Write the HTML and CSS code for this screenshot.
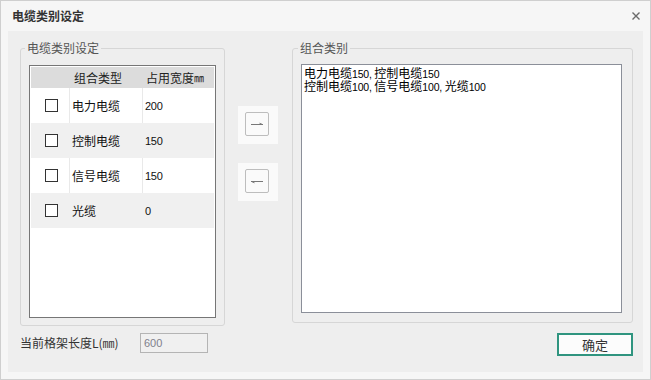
FILE: index.html
```html
<!DOCTYPE html>
<html lang="zh-CN">
<head>
<meta charset="utf-8">
<title>电缆类别设定</title>
<link rel="stylesheet" href="styles.css">
</head>
<body>
<div class="window">
  <div class="titlebar">
    <span class="title">电缆类别设定</span>
    <svg class="close" viewBox="0 0 8 8" width="8" height="8"><path d="M0.5 0.5L7.5 7.5M7.5 0.5L0.5 7.5" stroke="#6a6a6a" stroke-width="1.4" fill="none"/></svg>
  </div>
  <div class="body">
    <div class="main">
      <fieldset class="group group-left">
        <legend>电缆类别设定</legend>
        <div class="list">
          <div class="row head">
            <div class="cell c1"></div>
            <div class="cell c2">组合类型</div>
            <div class="cell c3">占用宽度<span class="unit">㎜</span></div>
          </div>
          <div class="row">
            <div class="cell c1"><span class="check"></span></div>
            <div class="cell c2">电力电缆</div>
            <div class="cell c3"><span class="num">200</span></div>
          </div>
          <div class="row alt">
            <div class="cell c1"><span class="check"></span></div>
            <div class="cell c2">控制电缆</div>
            <div class="cell c3"><span class="num">150</span></div>
          </div>
          <div class="row">
            <div class="cell c1"><span class="check"></span></div>
            <div class="cell c2">信号电缆</div>
            <div class="cell c3"><span class="num">150</span></div>
          </div>
          <div class="row alt">
            <div class="cell c1"><span class="check"></span></div>
            <div class="cell c2">光缆</div>
            <div class="cell c3"><span class="num">0</span></div>
          </div>
        </div>
      </fieldset>
      <div class="mid">
        <button class="mv" type="button"><span class="mv-box"><svg viewBox="0 0 22 22" width="22" height="22"><path d="M5 11.5H17M13.5 10.2L16.5 11.5" stroke="#777" stroke-width="1" fill="none"/></svg></span></button>
        <button class="mv" type="button"><span class="mv-box"><svg viewBox="0 0 22 22" width="22" height="22"><path d="M5 11.5H17M5.5 11.5L8.5 12.8" stroke="#777" stroke-width="1" fill="none"/></svg></span></button>
      </div>
      <fieldset class="group group-right">
        <legend>组合类别</legend>
        <div class="combo">
          <div class="line">电力电缆<span class="num">150,</span> 控制电缆<span class="num">150</span></div>
          <div class="line">控制电缆<span class="num">100,</span> 信号电缆<span class="num">100,</span> 光缆<span class="num">100</span></div>
        </div>
      </fieldset>
    </div>
    <div class="bottom">
      <span class="label">当前格架长度L(㎜)</span>
      <span class="input">600</span>
      <button class="ok" type="button">确定</button>
    </div>
  </div>
</div>
</body>
</html>
```
FILE: styles.css
```css
* { box-sizing: border-box; }
html, body { margin: 0; padding: 0; }
body {
  font-family: "Noto Sans CJK SC", "Noto Sans", sans-serif;
  font-size: 12px;
  color: #222;
  background: #fff;
}
.window {
  width: 651px;
  height: 380px;
  border: 1px solid #cfcfcf;
  background: #f6f6f6;
  display: flex;
  flex-direction: column;
}
.titlebar {
  height: 30px;
  flex: none;
  display: flex;
  align-items: center;
  justify-content: space-between;
  padding: 0 10px 0 11px;
}
.title {
  font-weight: 700;
  color: #333;
  font-size: 12px;
  line-height: 14px;
}
.close { display: block; }
.body {
  flex: 1;
  margin: 0 7px 7px;
  background: #eeeeee;
  display: flex;
  flex-direction: column;
}
.main {
  display: flex;
  align-items: flex-start;
  margin-top: 10px;
  padding-left: 12px;
}
.group {
  margin: 0;
  border: 1px solid #d6d6d6;
  border-radius: 3px;
  padding: 10px 8px 7px;
  min-width: 0;
}
.group legend {
  padding: 0 2px;
  font-size: 12px;
  line-height: 14px;
  color: #555;
}
.group-left legend { margin-left: -4px; }
.group-right { padding: 9px 10px 9px 8px; }
.group-right legend { margin-left: -3px; }
.list {
  width: 187px;
  height: 253px;
  border: 1px solid #767676;
  background: #fff;
  padding: 1px;
}
.row {
  display: flex;
  height: 35px;
  color: #111;
}
.row.head {
  height: 21px;
  background: #dcdcdc;
  color: #222;
}
.row.alt { background: #f0f0f0; }
.cell {
  display: flex;
  align-items: center;
  white-space: nowrap;
}
.c1 { width: 39px; padding-left: 14px; border-right: 1px solid #e9e9e9; }
.c2 { width: 73px; padding-left: 2px; border-right: 1px solid #e9e9e9; }
.c3 { width: 71px; padding-left: 2px; }
.row.alt .c1, .row.alt .c2, .row.head .c1, .row.head .c2 { border-right-color: transparent; }
.row.head .c2 { padding-left: 4px; }
.row.head .c3 { padding-left: 3px; }
.unit { font-size: 10px; }
.check {
  width: 13px;
  height: 13px;
  border: 1px solid #333;
  background: #fff;
}
.num {
  font-family: "Liberation Sans", Arial, sans-serif;
  font-size: 11px;
  letter-spacing: -0.3px;
}
.mid {
  flex: none;
  width: 40px;
  margin: 0 14px 0 13px;
  padding-top: 65px;
  display: flex;
  flex-direction: column;
  gap: 19px;
}
.mv {
  width: 40px;
  height: 38px;
  border: 0;
  padding: 6px 0 0 7px;
  background: #fafafa;
  display: flex;
  align-items: flex-start;
  justify-content: flex-start;
}
.mv-box {
  width: 24px;
  height: 24px;
  border: 1px solid #bdbdbd;
  border-radius: 2px;
  display: block;
}
.mv-box svg { display: block; }
.combo {
  width: 321px;
  height: 249px;
  border: 1px solid #8b8f99;
  background: #fff;
  padding: 1px 2px 0;
  color: #000;
}
.line {
  height: 13px;
  line-height: 13px;
  white-space: nowrap;
}
.combo .num {
  font-size: 10.5px;
  letter-spacing: -0.2px;
  line-height: 1;
}
.bottom {
  display: flex;
  align-items: flex-start;
  margin-top: 7px;
  padding: 0 10px 0 12px;
}
.label {
  width: 120px;
  line-height: 20px;
  color: #333;
  white-space: nowrap;
}
.input {
  width: 68px;
  height: 20px;
  border: 1px solid #b4b4b4;
  background: #f0f0f0;
  padding-left: 3px;
  line-height: 18px;
  color: #80808c;
  font-family: "Liberation Sans", Arial, sans-serif;
  font-size: 11px;
}
.ok {
  margin-left: auto;
  width: 76px;
  height: 23px;
  border: 2px solid #2f947f;
  background: #fcfcfc;
  font-family: "Noto Sans CJK SC", sans-serif;
  font-size: 13px;
  color: #333;
  padding: 0;
  display: flex;
  align-items: center;
  justify-content: center;
}
```
